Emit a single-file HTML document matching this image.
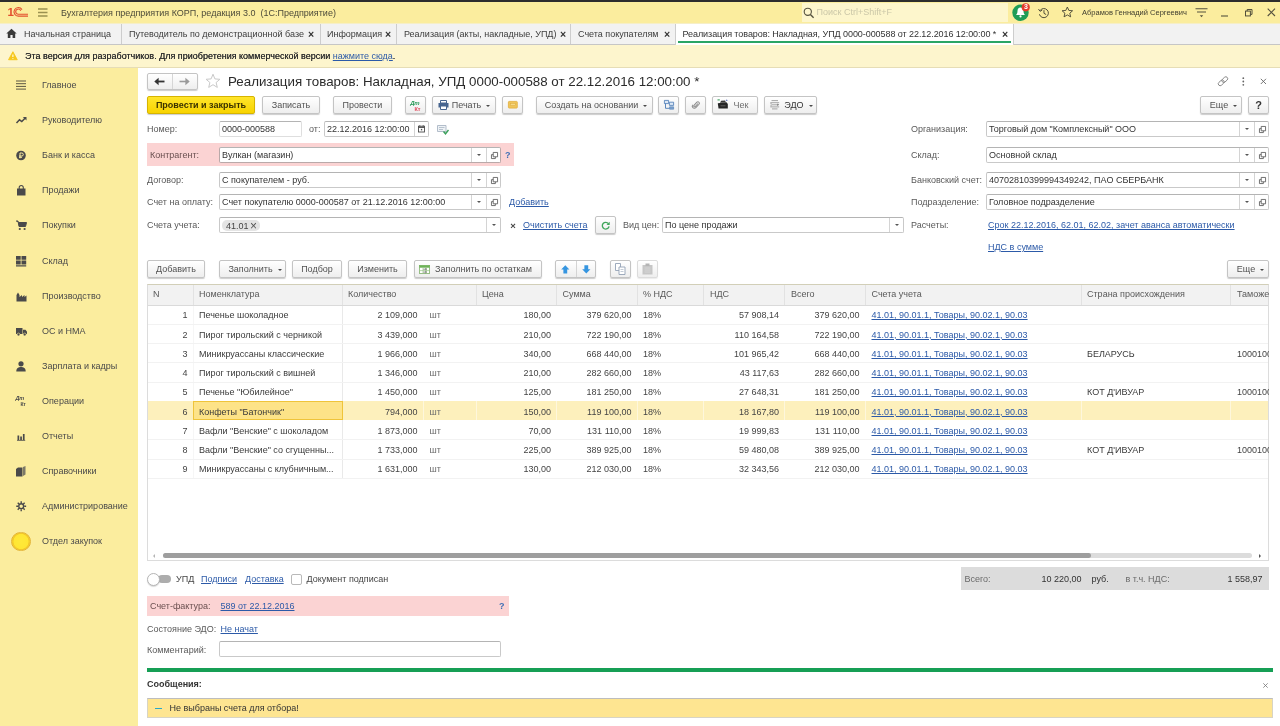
<!DOCTYPE html><html><head><meta charset="utf-8"><title>1C</title><style>
*{box-sizing:border-box;margin:0;padding:0}
html,body{width:1280px;height:726px;overflow:hidden;background:#fff}
body{font-family:"Liberation Sans",sans-serif;font-size:9px;color:#3a3a3a;position:relative;line-height:11px;will-change:transform}
.a{position:absolute;white-space:nowrap}
svg{position:absolute;overflow:visible}
.topbar{left:0;top:0;width:1280px;height:2px;background:#2d2d2d}
.hdr{left:0;top:2px;width:1280px;height:22px;background:#fbed9e;border-bottom:1px solid #f6efc8}
.tabs{left:0;top:24px;width:1280px;height:21px;background:#f2f2f2;border-bottom:1px solid #c6c6c6}
.warn{left:0;top:45px;width:1280px;height:23px;background:#fdf5cd;border-bottom:1px solid #e6ddb6}
.side{left:0;top:68px;width:138px;height:658px;background:#fbed9e}
.tsep{top:24px;width:1px;height:20px;background:#cdcdcd}
.tt{top:28px;color:#3c3c3c;line-height:12px}
.tx{top:27.500px;color:#333;font-weight:bold;font-size:10.500px;line-height:12px}
.btn{border:1px solid #c4c4c4;border-radius:2px;background:linear-gradient(#ffffff,#eeeeee);box-shadow:0 1px 1px rgba(0,0,0,.2);color:#525252;text-align:center;height:18px;line-height:16px}
.ybtn{border:1px solid #d6b400;background:linear-gradient(#ffe52b,#f8d300);font-weight:bold;color:#3a3200}
.inp{border:1px solid #c9c9c9;border-top-color:#b2b2b2;border-radius:2px;background:#fff;height:16px;line-height:14px;padding-left:2px;color:#333;overflow:hidden}
.lbl{color:#595959;line-height:12px}
.lnk{color:#2c5aa8;text-decoration:underline}
.sb{left:42px;color:#4a4a4a;line-height:12px}
</style></head><body><div class="a topbar"></div><div class="a hdr"></div><div class="a tabs"></div><div class="a warn"></div><div class="a side"></div><div class="a" style="left:7.500px;top:5.500px;font-size:11.500px;font-weight:bold;color:#e3502f;line-height:12px;letter-spacing:-1px">1</div><svg style="left:12px;top:7px" width="17" height="10" viewBox="0 0 17 10"><path d="M10 2.600A4.300 4.300 0 1 0 6.300 9.100H16" fill="none" stroke="#e3502f" stroke-width="1.100"/><path d="M8.700 3.700A2.600 2.600 0 1 0 6.300 7.300H16" fill="none" stroke="#e3502f" stroke-width="1.100"/></svg><svg style="left:37.500px;top:8px" width="10" height="9" viewBox="0 0 10 9"><path d="M0 1H9.500M0 4.500H9.500M0 8H9.500" stroke="#9a9150" stroke-width="1.300"/></svg><div class="a" style="left:61px;top:7px;color:#4d4b3a;line-height:12px">Бухгалтерия предприятия КОРП, редакция 3.0&nbsp; (1С:Предприятие)</div><div class="a" style="left:802px;top:2.500px;width:206px;height:19.800px;background:#fdf6cc"></div><svg style="left:802.700px;top:6.800px" width="12" height="12" viewBox="0 0 12 12"><circle cx="4.8" cy="4.8" r="3.6" fill="none" stroke="#55523f" stroke-width="1.1"/><path d="M7.4 7.6L10.6 10.8" stroke="#55523f" stroke-width="1.4"/></svg><div class="a" style="left:816.500px;top:6px;color:#cbc7a8;line-height:12px">Поиск Ctrl+Shift+F</div><svg style="left:1012.300px;top:4.300px" width="20" height="18" viewBox="0 0 20 18"><circle cx="8.5" cy="8.8" r="8.2" fill="#1f9d57"/><path d="M8.5 3.6c-2 0-3 1.6-3 3.4 0 2.2-.8 3.3-1.6 4.1h9.2c-.8-.8-1.6-1.900-1.600-4.100 0-1.800-1-3.400-3-3.400z" fill="#fff"/><circle cx="8.500" cy="12.4" r="1.100" fill="#fff"/><circle cx="13.700" cy="3.300" r="4.100" fill="#e53a2d"/></svg><div class="a" style="left:1023px;top:3px;width:6px;color:#fff;font-size:7px;font-weight:bold;line-height:8px;text-align:center">3</div><svg style="left:1038px;top:6.800px" width="12.300" height="12.300" viewBox="0 0 14 14"><path d="M2.2 4.2A5.2 5.2 0 1 1 1.600 8.300" fill="none" stroke="#4b4937" stroke-width="1.100"/><path d="M0.600 2.400L2.300 4.900L4.800 3.600" fill="none" stroke="#4b4937" stroke-width="1.100"/><path d="M6.800 3.600V7.200L9.300 8.600" fill="none" stroke="#4b4937" stroke-width="1.100"/></svg><svg style="left:1061.200px;top:5.800px" width="12.700" height="11.900" viewBox="0 0 15 14"><path d="M7.5 1.200L9.300 5.200L13.700 5.600L10.400 8.500L11.400 12.800L7.500 10.500L3.600 12.800L4.600 8.500L1.300 5.600L5.700 5.200Z" fill="none" stroke="#4b4937" stroke-width="1.100" stroke-linejoin="round"/></svg><div class="a" style="left:1082px;top:8px;font-size:7.5px;color:#3e3c2e;line-height:10px">Абрамов Геннадий Сергеевич</div><svg style="left:1195px;top:8px" width="13" height="10" viewBox="0 0 13 10"><path d="M0.500 0.700H12.500M2 4H11" stroke="#55523f" stroke-width="1.100"/><path d="M4.800 7.200H8.200L6.500 9.200Z" fill="#55523f"/></svg><svg style="left:1221px;top:15px" width="8" height="2" viewBox="0 0 8 2"><path d="M0 1H7" stroke="#55523f" stroke-width="1.100"/></svg><svg style="left:1244.800px;top:8.500px" width="7.800" height="7.800" viewBox="0 0 9 9"><rect x="0.600" y="2.400" width="5.600" height="5.600" fill="none" stroke="#4b4937" stroke-width="1.100"/><path d="M2.500 2.400V0.600H8.100V6.200H6.200" fill="none" stroke="#4b4937" stroke-width="1.100"/></svg><svg style="left:1267px;top:8px" width="9" height="9" viewBox="0 0 9 9"><path d="M0.700 0.700L8 8M8 0.700L0.700 8" stroke="#55523f" stroke-width="1.100"/></svg><svg style="left:6px;top:28px" width="11" height="11" viewBox="0 0 11 11"><path d="M5.500 0.800L0.300 5.600H1.800V10H4.400V6.900H6.600V10H9.200V5.600H10.700Z" fill="#3a3a3a"/></svg><div class="a tt" style="left:24px">Начальная страница</div><div class="a tsep" style="left:121px"></div><div class="a tt" style="left:129px">Путеводитель по демонстрационной базе</div><div class="a tx" style="left:308px">×</div><div class="a tsep" style="left:320px"></div><div class="a tt" style="left:327px">Информация</div><div class="a tx" style="left:385px">×</div><div class="a tsep" style="left:396px"></div><div class="a tt" style="left:404px">Реализация (акты, накладные, УПД)</div><div class="a tx" style="left:560px">×</div><div class="a tsep" style="left:570px"></div><div class="a tt" style="left:578px">Счета покупателям</div><div class="a tx" style="left:664px">×</div><div class="a" style="left:675px;top:24px;width:339px;height:21px;background:#fff;border-left:1px solid #cdcdcd;border-right:1px solid #cdcdcd"></div><div class="a" style="left:678px;top:41.300px;width:333px;height:1.500px;background:#2aa565"></div><div class="a tt" id="acttab" style="left:682.500px;color:#333;letter-spacing:-0.065px">Реализация товаров: Накладная, УПД 0000-000588 от 22.12.2016 12:00:00 *</div><div class="a tx" style="left:1002px">×</div><svg style="left:7.500px;top:51.300px" width="9.800" height="9.800" viewBox="0 0 11 11"><path d="M5.500 0.800L10.400 9.800H0.600Z" fill="#f6c71c" stroke="#f6c71c" stroke-width="1" stroke-linejoin="round"/><path d="M5.500 3.800V6.600M5.500 7.800V8.800" stroke="#fff" stroke-width="1.200"/></svg><div class="a" style="left:25px;top:50px;color:#2f2f2f;line-height:12px;text-shadow:0 0 0.200px #2f2f2f">Эта версия для разработчиков. Для приобретения коммерческой версии <span class="lnk" style="text-shadow:none">нажмите сюда</span>.</div><div class="a sb" style="top:79.1px">Главное</div><svg style="left:16px;top:80.1px" width="11" height="11" viewBox="0 0 11 11"><path d="M0 1H10M0 3.700H10M0 6.400H10M0 9.100H10" stroke="#5a5743" stroke-width="1"/></svg><div class="a sb" style="top:114.2px">Руководителю</div><svg style="left:16px;top:115.2px" width="11" height="11" viewBox="0 0 11 11"><path d="M0.500 8L3.500 4.800L5.800 6.600L9.500 2.800" fill="none" stroke="#4a4a4a" stroke-width="1.500"/><path d="M6.800 2H10.500V5.600Z" fill="#4a4a4a"/></svg><div class="a sb" style="top:149.3px">Банк и касса</div><svg style="left:16px;top:150.3px" width="11" height="11" viewBox="0 0 11 11"><circle cx="5" cy="5.500" r="4.800" fill="#4a4a4a"/><path d="M4 8.300V3H5.800A1.500 1.500 0 0 1 5.800 6H3M3 7.300H6" fill="none" stroke="#fbed9e" stroke-width="1"/></svg><div class="a sb" style="top:184.3px">Продажи</div><svg style="left:16px;top:185.3px" width="11" height="11" viewBox="0 0 11 11"><path d="M1 3.500H9.500V10.500H1Z" fill="#4a4a4a"/><path d="M3.200 4.500V2.500A2 2 0 0 1 7.300 2.500V4.500" fill="none" stroke="#4a4a4a" stroke-width="1.100"/></svg><div class="a sb" style="top:219.4px">Покупки</div><svg style="left:16px;top:220.4px" width="11" height="11" viewBox="0 0 11 11"><path d="M0 1H2L3 6.500H9.500L10.500 2.500H2.500" fill="#4a4a4a" stroke="#4a4a4a" stroke-width="1" stroke-linejoin="round"/><circle cx="3.800" cy="9" r="1.100" fill="#4a4a4a"/><circle cx="8.600" cy="9" r="1.100" fill="#4a4a4a"/></svg><div class="a sb" style="top:254.5px">Склад</div><svg style="left:16px;top:255.5px" width="11" height="11" viewBox="0 0 11 11"><path d="M0 0H4.700V3.800H0ZM5.500 0H10.200V3.800H5.500ZM0 4.600H4.700V8.400H0ZM5.500 4.600H10.200V8.400H5.500ZM0 9.200H10.200V10.400H0Z" fill="#4a4a4a"/></svg><div class="a sb" style="top:289.6px">Производство</div><svg style="left:16px;top:290.6px" width="11" height="11" viewBox="0 0 11 11"><path d="M0.500 10.500V4L2 1.500L3.500 4V6L6 4V6L8.500 4V6L10.500 4.500V10.500Z" fill="#4a4a4a"/></svg><div class="a sb" style="top:324.7px">ОС и НМА</div><svg style="left:16px;top:325.7px" width="11" height="11" viewBox="0 0 11 11"><path d="M0 2H6.500V8H0ZM7 3.800H9.500L11 5.800V8H7Z" fill="#4a4a4a"/><circle cx="2.500" cy="8.500" r="1.400" fill="#4a4a4a" stroke="#fbed9e" stroke-width=".6"/><circle cx="8.700" cy="8.500" r="1.400" fill="#4a4a4a" stroke="#fbed9e" stroke-width=".6"/></svg><div class="a sb" style="top:359.7px">Зарплата и кадры</div><svg style="left:16px;top:360.7px" width="11" height="11" viewBox="0 0 11 11"><circle cx="5" cy="2.800" r="2.600" fill="#4a4a4a"/><path d="M0.300 10.500C0.300 7 2.500 6 5 6S9.700 7 9.700 10.500Z" fill="#4a4a4a"/></svg><div class="a sb" style="top:394.8px">Операции</div><div class="a sb" style="top:429.9px">Отчеты</div><svg style="left:16px;top:430.9px" width="11" height="11" viewBox="0 0 11 11"><path d="M1.500 4.500H3.200V9H1.500ZM4.200 5.500H5.900V9H4.200ZM6.900 3H8.600V9H6.900Z" fill="#4a4a4a"/><path d="M1 9.400H9.200" stroke="#4a4a4a" stroke-width=".8"/></svg><div class="a sb" style="top:465.0px">Справочники</div><svg style="left:16px;top:466.0px" width="11" height="11" viewBox="0 0 11 11"><path d="M0 3L2 1.500H6.500V10.500H0Z" fill="#4a4a4a"/><path d="M7 1V10L9.500 8.500V0Z" fill="#7c7967"/></svg><div class="a sb" style="top:500.1px">Администрирование</div><div class="a sb" style="top:535.1px">Отдел закупок</div><div class="a" style="left:15.500px;top:394.8px;font-size:5.500px;font-weight:bold;font-style:italic;color:#4a4a4a;line-height:6px;letter-spacing:-0.300px">Дт</div><div class="a" style="left:20.500px;top:400.8px;font-size:5px;font-weight:bold;color:#4a4a4a;line-height:6px;letter-spacing:-0.300px">Кт</div><svg style="left:16.300px;top:501.4px" width="10.400" height="10.400" viewBox="0 0 12 12"><circle cx="6" cy="6" r="2.800" fill="none" stroke="#4a4a4a" stroke-width="1.600"/><path d="M6 0.300V2.500M6 9.500V11.700M0.300 6H2.500M9.500 6H11.700M2 2L3.500 3.500M8.500 8.500L10 10M2 10L3.500 8.500M8.500 3.500L10 2" stroke="#4a4a4a" stroke-width="1.600"/></svg><div class="a" style="left:11.300px;top:531.9px;width:19.400px;height:19.400px;border-radius:50%;background:radial-gradient(circle,#ffe93a 0,#ffe633 58%,#f2c62a 64%,#fad52a 72%,#f7d02a 100%);border:1.200px solid #e3b436"></div><div class="a btn" style="left:147px;top:73px;width:51px;height:17px"></div><div class="a" style="left:172px;top:74px;width:1px;height:15px;background:#d6d6d6"></div><svg style="left:154px;top:77px" width="11" height="9" viewBox="0 0 11 9"><path d="M10.500 4.500H2" stroke="#333" stroke-width="1.800"/><path d="M0.300 4.500L4.600 0.800V8.200Z" fill="#333"/></svg><svg style="left:179px;top:77px" width="11" height="9" viewBox="0 0 11 9"><path d="M0.500 4.500H9" stroke="#9a9a9a" stroke-width="1.600"/><path d="M10.700 4.500L6.400 0.800V8.200Z" fill="#9a9a9a"/></svg><svg style="left:205px;top:73px" width="16" height="16" viewBox="0 0 16 16"><path d="M8 1.200L9.900 5.900L14.900 6.300L11.100 9.500L12.300 14.400L8 11.700L3.700 14.400L4.900 9.500L1.100 6.300L6.100 5.900Z" fill="#fff" stroke="#c9c9c9" stroke-width="1" stroke-linejoin="round"/></svg><div class="a" style="left:228px;top:74px;font-size:13.330px;line-height:16px;color:#2b2b2b">Реализация товаров: Накладная, УПД 0000-000588 от 22.12.2016 12:00:00 *</div><svg style="left:1216.500px;top:74.500px" width="12" height="12.500" viewBox="0 0 12 12.500"><g fill="none" stroke="#858585" stroke-width="0.900" transform="rotate(-42 6 6.250)"><rect x="0.300" y="4.350" width="6.600" height="3.800" rx="1.900"/><rect x="5.100" y="4.350" width="6.600" height="3.800" rx="1.900"/></g></svg><svg style="left:1241.500px;top:76.800px" width="3" height="10" viewBox="0 0 3 10"><circle cx="1.300" cy="1.200" r="0.900" fill="#666"/><circle cx="1.300" cy="4.500" r="0.900" fill="#666"/><circle cx="1.300" cy="7.800" r="0.900" fill="#666"/></svg><svg style="left:1260.200px;top:77.700px" width="7" height="7" viewBox="0 0 7 7"><path d="M0.800 0.800L6 6M6 0.800L0.800 6" stroke="#666" stroke-width="0.900"/></svg><div class="a btn ybtn" style="left:147px;top:96px;width:108px;height:18px;line-height:16px;">Провести и закрыть</div><div class="a btn " style="left:262px;top:96px;width:58px;height:18px;line-height:16px;">Записать</div><div class="a btn " style="left:333px;top:96px;width:59px;height:18px;line-height:16px;">Провести</div><div class="a btn " style="left:405px;top:96px;width:21px;height:18px;line-height:16px;"></div><div class="a" style="left:410.300px;top:100px;font-size:6px;font-weight:bold;font-style:italic;color:#2a9a5a;line-height:7px;letter-spacing:-0.300px">Дт</div><div class="a" style="left:414.500px;top:105.500px;font-size:5.500px;font-weight:bold;color:#e0485a;line-height:6px">Кт</div><div class="a btn " style="left:432px;top:96px;width:64px;height:18px;line-height:16px;"><span style="margin-left:14px">Печать</span><span style="display:inline-block;width:0;height:0;border:2px solid transparent;border-top:2.500px solid #4a4a4a;border-bottom:0;vertical-align:middle;margin-left:5px;position:relative;top:0.500px"></span></div><svg style="left:438px;top:100px" width="11" height="10" viewBox="0 0 11 10"><path d="M2.500 0.500H8.500V3H2.500Z" fill="#fff" stroke="#46648f" stroke-width="1"/><path d="M0.500 3H10.500V7.500H0.500Z" fill="#46648f"/><path d="M2.500 6H8.500V9.500H2.500Z" fill="#fff" stroke="#46648f" stroke-width="1"/></svg><div class="a btn " style="left:502px;top:96px;width:21px;height:18px;line-height:16px;"></div><svg style="left:507.600px;top:101.300px" width="9.700" height="7.500" viewBox="0 0 9.700 7.500"><rect x="0.400" y="0.400" width="8.900" height="6.700" rx="0.800" fill="#efc55a" stroke="#e2ad3c" stroke-width="0.800"/><rect x="2.300" y="2.300" width="5.100" height="2.400" fill="#f6d987" stroke="#dba83a" stroke-width="0.500"/></svg><div class="a btn " style="left:536px;top:96px;width:117px;height:18px;line-height:16px;"><span style="margin-left:3px">Создать на основании</span><span style="display:inline-block;width:0;height:0;border:2px solid transparent;border-top:2.500px solid #4a4a4a;border-bottom:0;vertical-align:middle;margin-left:5px;position:relative;top:0.500px"></span></div><div class="a btn " style="left:658px;top:96px;width:21px;height:18px;line-height:16px;"></div><svg style="left:664px;top:100.300px" width="10" height="9.500" viewBox="0 0 10 9.500"><path d="M0.400 0.400H4.600V3.600H0.400Z" fill="#dce8f6" stroke="#4a7ab5" stroke-width="0.800"/><path d="M5.400 2.200H9.600V5.400H5.400Z" fill="#dce8f6" stroke="#4a7ab5" stroke-width="0.800"/><path d="M1.500 3.600V8.300H5.500" fill="none" stroke="#4a7ab5" stroke-width="0.900"/><path d="M5.600 6.800H9.600V9.200H5.600Z" fill="#7fa3cf" stroke="#4a7ab5" stroke-width="0.600"/></svg><div class="a btn " style="left:685px;top:96px;width:21px;height:18px;line-height:16px;"></div><svg style="left:691px;top:100.800px" width="9.500" height="8.200" viewBox="0 0 11 12"><path d="M8.800 4.200L4.800 8.600A1.300 1.300 0 0 1 2.900 6.800L7.200 2.200A2.200 2.200 0 0 1 10.300 5.300L5.600 10.300A3 3 0 0 1 1.300 6" fill="none" stroke="#8a8a8a" stroke-width="1.500" transform="translate(0 -0.500)"/></svg><div class="a btn " style="left:712px;top:96px;width:46px;height:18px;line-height:16px;"><span style="margin-left:12px;color:#6e6e6e">Чек</span></div><svg style="left:717px;top:99px" width="11.500" height="10" viewBox="0 0 11.500 10"><path d="M0.800 4.200L9.500 3.200L10.800 5V9.600H1.500Z" fill="#262626"/><path d="M3 3.800L4.200 1.800L8 1.400L9 3.400Z" fill="#3a3a3a"/><path d="M0.500 0.900H2.800" stroke="#3aa05a" stroke-width="1.100"/><path d="M8.600 1.800L9.900 0.300L10.600 2" fill="#5b6fc0"/><path d="M3.500 6.800H8.500" stroke="#777" stroke-width="0.700"/></svg><div class="a btn " style="left:764px;top:96px;width:53px;height:18px;line-height:16px;"><span style="margin-left:16px;color:#333">ЭДО</span><span style="display:inline-block;width:0;height:0;border:2px solid transparent;border-top:2.500px solid #4a4a4a;border-bottom:0;vertical-align:middle;margin-left:5px;position:relative;top:0.500px"></span></div><svg style="left:769.500px;top:100.300px" width="9.500" height="9.500" viewBox="0 0 9.500 9.500"><path d="M1.500 0.600H8M0.300 2.700H9.200M1.500 4.800H8M0.300 6.900H9.200M2 8.900H7.500" stroke="#9a9a9a" stroke-width="0.900"/><path d="M7.300 3.600L9.200 4.800L7.300 6Z" fill="#777"/><path d="M0.300 3.800H1.800M0.300 5.800H1.800" stroke="#888" stroke-width="0.700"/></svg><div class="a btn " style="left:1200px;top:96px;width:42px;height:18px;line-height:16px;"><span style="margin-left:5px">Еще</span><span style="display:inline-block;width:0;height:0;border:2px solid transparent;border-top:2.500px solid #4a4a4a;border-bottom:0;vertical-align:middle;margin-left:5px;position:relative;top:0.500px"></span></div><div class="a btn " style="left:1248px;top:96px;width:21px;height:18px;line-height:16px;font-weight:bold;color:#333;font-size:11px">?</div><div class="a lbl" style="left:147px;top:122.5px;">Номер:</div><div class="a inp" style="left:219px;top:121px;width:83px;height:16px;line-height:14px;border-color:#dedede;border-top-color:#b4b4b4">0000-000588</div><div class="a lbl" style="left:309px;top:122.5px;">от:</div><div class="a inp" style="left:324px;top:121px;width:105px;height:16px;line-height:14px;border-color:#c9c9c9;border-top-color:#b4b4b4">22.12.2016 12:00:00</div><div class="a" style="left:414px;top:122px;width:1px;height:14px;background:#d4d4d4"></div><svg style="left:417.500px;top:124.500px" width="7" height="7.500" viewBox="0 0 7 7.500"><rect x="0.500" y="1.200" width="6" height="5.800" fill="#fff" stroke="#4a4a4a" stroke-width="0.900"/><path d="M0.500 2.300H6.500" stroke="#4a4a4a" stroke-width="1.200"/><path d="M1.800 0.200V1.500M5.200 0.200V1.500" stroke="#4a4a4a" stroke-width="0.900"/><rect x="2.900" y="3.900" width="1.300" height="1.500" fill="#555"/></svg><svg style="left:437px;top:125px" width="12" height="10" viewBox="0 0 12 10"><path d="M0.500 0.500H9V6.500H0.500Z" fill="#eef2f6" stroke="#a9b6c4" stroke-width="0.900"/><path d="M2 2.500H7.500M2 4.500H6" stroke="#a9b6c4" stroke-width="0.800"/><path d="M6.500 6.500L8.500 8.800L11.500 5" fill="none" stroke="#3aa05a" stroke-width="1.400"/></svg><div class="a" style="left:147px;top:143px;width:367px;height:23px;background:#fbd3d3"></div><div class="a lbl" style="left:150px;top:148.5px;color:#6a5050;">Контрагент:</div><div class="a inp" style="left:219px;top:147px;width:282px;height:16px;line-height:14px;border-color:#b9a9a9;border-top-color:#b4b4b4">Вулкан (магазин)</div><div class="a" style="left:471px;top:148px;width:1px;height:14px;background:#d4d4d4"></div><div class="a" style="left:486px;top:148px;width:1px;height:14px;background:#d4d4d4"></div><div class="a" style="left:476.5px;top:154.2px;width:0;height:0;border:2px solid transparent;border-top:2.500px solid #555;border-bottom:0"></div><svg style="left:490.5px;top:151.5px" width="7" height="7" viewBox="0 0 8 8"><path d="M2.500 0.500H7.500V5.500H2.500Z" fill="#fff" stroke="#5e5e5e" stroke-width="1"/><path d="M2.500 3H0.500V7.500H5V5.500" fill="none" stroke="#5e5e5e" stroke-width="1"/></svg><div class="a" style="left:505px;top:148.500px;font-weight:bold;color:#3f6fb5;line-height:12px">?</div><div class="a lbl" style="left:147px;top:173.5px;">Договор:</div><div class="a inp" style="left:219px;top:172px;width:282px;height:16px;line-height:14px;border-color:#c9c9c9;border-top-color:#b4b4b4">С покупателем - руб.</div><div class="a" style="left:471px;top:173px;width:1px;height:14px;background:#d4d4d4"></div><div class="a" style="left:486px;top:173px;width:1px;height:14px;background:#d4d4d4"></div><div class="a" style="left:476.5px;top:179.2px;width:0;height:0;border:2px solid transparent;border-top:2.500px solid #555;border-bottom:0"></div><svg style="left:490.5px;top:176.5px" width="7" height="7" viewBox="0 0 8 8"><path d="M2.500 0.500H7.500V5.500H2.500Z" fill="#fff" stroke="#5e5e5e" stroke-width="1"/><path d="M2.500 3H0.500V7.500H5V5.500" fill="none" stroke="#5e5e5e" stroke-width="1"/></svg><div class="a lbl" style="left:147px;top:195.5px;">Счет на оплату:</div><div class="a inp" style="left:219px;top:194px;width:282px;height:16px;line-height:14px;border-color:#c9c9c9;border-top-color:#b4b4b4">Счет покупателю 0000-000587 от 21.12.2016 12:00:00</div><div class="a" style="left:471px;top:195px;width:1px;height:14px;background:#d4d4d4"></div><div class="a" style="left:486px;top:195px;width:1px;height:14px;background:#d4d4d4"></div><div class="a" style="left:476.5px;top:201.2px;width:0;height:0;border:2px solid transparent;border-top:2.500px solid #555;border-bottom:0"></div><svg style="left:490.5px;top:198.5px" width="7" height="7" viewBox="0 0 8 8"><path d="M2.500 0.500H7.500V5.500H2.500Z" fill="#fff" stroke="#5e5e5e" stroke-width="1"/><path d="M2.500 3H0.500V7.500H5V5.500" fill="none" stroke="#5e5e5e" stroke-width="1"/></svg><div class="a lnk" style="left:509px;top:195.5px;line-height:12px">Добавить</div><div class="a lbl" style="left:147px;top:219.0px;">Счета учета:</div><div class="a inp" style="left:219px;top:217px;width:282px;height:16px;line-height:14px;border-color:#c9c9c9;border-top-color:#b4b4b4"><span style="display:inline-block;background:#e4e4e4;border-radius:5px;height:11px;line-height:11px;padding:0 3px 0 4px;margin-left:0px;color:#444;position:relative;top:0.500px">41.01<span style="font-size:12px;line-height:11px;color:#555;margin-left:1.500px;position:relative;top:1px">×</span></span></div><div class="a" style="left:486px;top:218px;width:1px;height:14px;background:#d4d4d4"></div><div class="a" style="left:491.5px;top:224.2px;width:0;height:0;border:2px solid transparent;border-top:2.500px solid #555;border-bottom:0"></div><div class="a" style="left:510.300px;top:219.500px;color:#444;font-size:9.500px;font-weight:bold;line-height:12px">×</div><div class="a lnk" style="left:523px;top:219.0px;line-height:12px">Очистить счета</div><div class="a btn " style="left:595px;top:216px;width:21px;height:18px;line-height:16px;"></div><svg style="left:600.800px;top:220.800px" width="9.300" height="9.300" viewBox="0 0 11 11"><path d="M8.800 3.200A4 4 0 1 0 9.500 6.300" fill="none" stroke="#3fa55a" stroke-width="1.600"/><path d="M10.300 0.800V4.600H6.500Z" fill="#3fa55a"/></svg><div class="a lbl" style="left:623px;top:219.0px;">Вид цен:</div><div class="a inp" style="left:662px;top:217px;width:242px;height:16px;line-height:14px;border-color:#c9c9c9;border-top-color:#b4b4b4">По цене продажи</div><div class="a" style="left:889px;top:218px;width:1px;height:14px;background:#d4d4d4"></div><div class="a" style="left:894.5px;top:224.2px;width:0;height:0;border:2px solid transparent;border-top:2.500px solid #555;border-bottom:0"></div><div class="a lbl" style="left:911px;top:122.5px;">Организация:</div><div class="a inp" style="left:986px;top:121px;width:283px;height:16px;line-height:14px;border-color:#c9c9c9;border-top-color:#b4b4b4">Торговый дом "Комплексный" ООО</div><div class="a" style="left:1239px;top:122px;width:1px;height:14px;background:#d4d4d4"></div><div class="a" style="left:1254px;top:122px;width:1px;height:14px;background:#d4d4d4"></div><div class="a" style="left:1244.5px;top:128.2px;width:0;height:0;border:2px solid transparent;border-top:2.500px solid #555;border-bottom:0"></div><svg style="left:1258.5px;top:125.5px" width="7" height="7" viewBox="0 0 8 8"><path d="M2.500 0.500H7.500V5.500H2.500Z" fill="#fff" stroke="#5e5e5e" stroke-width="1"/><path d="M2.500 3H0.500V7.500H5V5.500" fill="none" stroke="#5e5e5e" stroke-width="1"/></svg><div class="a lbl" style="left:911px;top:148.5px;">Склад:</div><div class="a inp" style="left:986px;top:147px;width:283px;height:16px;line-height:14px;border-color:#c9c9c9;border-top-color:#b4b4b4">Основной склад</div><div class="a" style="left:1239px;top:148px;width:1px;height:14px;background:#d4d4d4"></div><div class="a" style="left:1254px;top:148px;width:1px;height:14px;background:#d4d4d4"></div><div class="a" style="left:1244.5px;top:154.2px;width:0;height:0;border:2px solid transparent;border-top:2.500px solid #555;border-bottom:0"></div><svg style="left:1258.5px;top:151.5px" width="7" height="7" viewBox="0 0 8 8"><path d="M2.500 0.500H7.500V5.500H2.500Z" fill="#fff" stroke="#5e5e5e" stroke-width="1"/><path d="M2.500 3H0.500V7.500H5V5.500" fill="none" stroke="#5e5e5e" stroke-width="1"/></svg><div class="a lbl" style="left:911px;top:173.5px;">Банковский счет:</div><div class="a inp" style="left:986px;top:172px;width:283px;height:16px;line-height:14px;border-color:#c9c9c9;border-top-color:#b4b4b4">40702810399994349242, ПАО СБЕРБАНК</div><div class="a" style="left:1239px;top:173px;width:1px;height:14px;background:#d4d4d4"></div><div class="a" style="left:1254px;top:173px;width:1px;height:14px;background:#d4d4d4"></div><div class="a" style="left:1244.5px;top:179.2px;width:0;height:0;border:2px solid transparent;border-top:2.500px solid #555;border-bottom:0"></div><svg style="left:1258.5px;top:176.5px" width="7" height="7" viewBox="0 0 8 8"><path d="M2.500 0.500H7.500V5.500H2.500Z" fill="#fff" stroke="#5e5e5e" stroke-width="1"/><path d="M2.500 3H0.500V7.500H5V5.500" fill="none" stroke="#5e5e5e" stroke-width="1"/></svg><div class="a lbl" style="left:911px;top:195.5px;">Подразделение:</div><div class="a inp" style="left:986px;top:194px;width:283px;height:16px;line-height:14px;border-color:#c9c9c9;border-top-color:#b4b4b4">Головное подразделение</div><div class="a" style="left:1239px;top:195px;width:1px;height:14px;background:#d4d4d4"></div><div class="a" style="left:1254px;top:195px;width:1px;height:14px;background:#d4d4d4"></div><div class="a" style="left:1244.5px;top:201.2px;width:0;height:0;border:2px solid transparent;border-top:2.500px solid #555;border-bottom:0"></div><svg style="left:1258.5px;top:198.5px" width="7" height="7" viewBox="0 0 8 8"><path d="M2.500 0.500H7.500V5.500H2.500Z" fill="#fff" stroke="#5e5e5e" stroke-width="1"/><path d="M2.500 3H0.500V7.500H5V5.500" fill="none" stroke="#5e5e5e" stroke-width="1"/></svg><div class="a lbl" style="left:911px;top:219.0px;">Расчеты:</div><div class="a lnk" style="left:988px;top:219.0px;line-height:12px">Срок 22.12.2016, 62.01, 62.02, зачет аванса автоматически</div><div class="a lnk" style="left:988px;top:241.0px;line-height:12px">НДС в сумме</div><div class="a btn " style="left:147px;top:260px;width:58px;height:18px;line-height:16px;">Добавить</div><div class="a btn " style="left:219px;top:260px;width:67px;height:18px;line-height:16px;"><span style="margin-left:5px">Заполнить</span><span style="display:inline-block;width:0;height:0;border:2px solid transparent;border-top:2.500px solid #4a4a4a;border-bottom:0;vertical-align:middle;margin-left:5px;position:relative;top:0.500px"></span></div><div class="a btn " style="left:292px;top:260px;width:50px;height:18px;line-height:16px;">Подбор</div><div class="a btn " style="left:348px;top:260px;width:59px;height:18px;line-height:16px;">Изменить</div><div class="a btn " style="left:414px;top:260px;width:128px;height:18px;line-height:16px;"><span style="margin-left:11px">Заполнить по остаткам</span></div><svg style="left:418.800px;top:264.800px" width="11" height="9" viewBox="0 0 11 9"><rect x="0.400" y="0.400" width="10.200" height="8.200" fill="#fff" stroke="#7fb069" stroke-width="0.800"/><rect x="0.400" y="0.400" width="10.200" height="2.300" fill="#6db357"/><path d="M0.400 5.600H10.600M4 2.700V8.600M7.500 2.700V8.600" stroke="#9cc58a" stroke-width="0.700"/><path d="M4.300 4.200H7.200M6.200 3.300L7.300 4.200L6.200 5.100" fill="none" stroke="#666" stroke-width="0.700"/><path d="M4.300 7.100H7.200M6.200 6.200L7.300 7.100L6.200 8" fill="none" stroke="#666" stroke-width="0.700"/></svg><div class="a btn " style="left:555px;top:260px;width:41px;height:18px;line-height:16px;"></div><div class="a" style="left:576px;top:261px;width:1px;height:16px;background:#d4d4d4"></div><svg style="left:561.300px;top:265px" width="8.600" height="8.800" viewBox="0 0 9 9.200"><path d="M4.500 0.200L8.800 4.700H6.500V9H2.500V4.700H0.200Z" fill="#3595e0"/></svg><svg style="left:581.800px;top:265px" width="8.600" height="8.800" viewBox="0 0 9 9.200"><path d="M4.500 9L8.800 4.500H6.500V0.200H2.500V4.500H0.200Z" fill="#3595e0"/></svg><div class="a btn " style="left:610px;top:260px;width:21px;height:18px;line-height:16px;"></div><svg style="left:615px;top:263px" width="11" height="12" viewBox="0 0 11 12"><path d="M0.500 0.500H5.500V7.500H0.500Z" fill="#fff" stroke="#93a2b5" stroke-width="0.900"/><path d="M4 4H10V11.500H4Z" fill="#fff" stroke="#93a2b5" stroke-width="0.900"/><path d="M5.500 6.500H8.500M5.500 8.500H8.500" stroke="#a9b5c4" stroke-width="0.700"/></svg><div class="a btn " style="left:637px;top:260px;width:21px;height:18px;line-height:16px;border-color:#dcdcdc;box-shadow:0 1px 1px rgba(0,0,0,.08)"></div><svg style="left:642px;top:263px" width="11" height="12" viewBox="0 0 11 12"><path d="M0.500 2H10.500V11.500H0.500Z" fill="#c6c6c6"/><path d="M3.500 0.500H7.500V3H3.500Z" fill="#b4b4b4"/><path d="M2.500 5H8.500M2.500 7H8.500M2.500 9H8.500" stroke="#d9d9d9" stroke-width="0.800"/></svg><div class="a btn " style="left:1227px;top:260px;width:42px;height:18px;line-height:16px;"><span style="margin-left:5px">Еще</span><span style="display:inline-block;width:0;height:0;border:2px solid transparent;border-top:2.500px solid #4a4a4a;border-bottom:0;vertical-align:middle;margin-left:5px;position:relative;top:0.500px"></span></div><div class="a" style="left:147px;top:284px;width:1122px;height:277px;border:1px solid #dcdcdc;border-top-color:#d2cfb8;background:#fff"></div><div class="a" style="left:148px;top:285px;width:1120px;height:21px;background:#f2f2f2;border-bottom:1px solid #dadada"></div><div class="a" style="left:153px;top:288px;color:#595959;line-height:12px">N</div><div class="a" style="left:199px;top:288px;color:#595959;line-height:12px">Номенклатура</div><div class="a" style="left:348px;top:288px;color:#595959;line-height:12px">Количество</div><div class="a" style="left:482px;top:288px;color:#595959;line-height:12px">Цена</div><div class="a" style="left:562.5px;top:288px;color:#595959;line-height:12px">Сумма</div><div class="a" style="left:643px;top:288px;color:#595959;line-height:12px">% НДС</div><div class="a" style="left:710px;top:288px;color:#595959;line-height:12px">НДС</div><div class="a" style="left:791px;top:288px;color:#595959;line-height:12px">Всего</div><div class="a" style="left:871.5px;top:288px;color:#595959;line-height:12px">Счета учета</div><div class="a" style="left:1087px;top:288px;color:#595959;line-height:12px">Страна происхождения</div><div class="a" style="left:1237px;top:288px;color:#595959;line-height:12px">Таможе</div><div class="a" style="left:193px;top:285px;width:1px;height:20px;background:#e2e2e2"></div><div class="a" style="left:193px;top:306px;width:1px;height:173px;background:#f6f6f6"></div><div class="a" style="left:342px;top:285px;width:1px;height:20px;background:#e2e2e2"></div><div class="a" style="left:342px;top:306px;width:1px;height:173px;background:#e9e9e9"></div><div class="a" style="left:476px;top:285px;width:1px;height:20px;background:#e2e2e2"></div><div class="a" style="left:556px;top:285px;width:1px;height:20px;background:#e2e2e2"></div><div class="a" style="left:637px;top:285px;width:1px;height:20px;background:#e2e2e2"></div><div class="a" style="left:703px;top:285px;width:1px;height:20px;background:#e2e2e2"></div><div class="a" style="left:784px;top:285px;width:1px;height:20px;background:#e2e2e2"></div><div class="a" style="left:865px;top:285px;width:1px;height:20px;background:#e2e2e2"></div><div class="a" style="left:1081px;top:285px;width:1px;height:20px;background:#e2e2e2"></div><div class="a" style="left:1230px;top:285px;width:1px;height:20px;background:#e2e2e2"></div><div class="a" style="left:148px;top:323.8px;width:1120px;height:1px;background:#f2f2f2"></div><div class="a" style="right:1092.5px;top:309.3px;color:#444;line-height:12px">1</div><div class="a" style="left:199px;top:309.3px;color:#444;line-height:12px;color:#3a3a3a">Печенье шоколадное</div><div class="a" style="right:862.5px;top:309.3px;color:#444;line-height:12px">2 109,000</div><div class="a" style="left:429.5px;top:309.3px;color:#444;line-height:12px;color:#6a6a6a">шт</div><div class="a" style="right:729px;top:309.3px;color:#444;line-height:12px">180,00</div><div class="a" style="right:648.5px;top:309.3px;color:#444;line-height:12px">379 620,00</div><div class="a" style="left:643px;top:309.3px;color:#444;line-height:12px;">18%</div><div class="a" style="right:501px;top:309.3px;color:#444;line-height:12px">57 908,14</div><div class="a" style="right:420.5px;top:309.3px;color:#444;line-height:12px">379 620,00</div><div class="a lnk" style="left:871.500px;top:309.3px;line-height:12px">41.01, 90.01.1, Товары, 90.02.1, 90.03</div><div class="a" style="left:148px;top:343.0px;width:1120px;height:1px;background:#f2f2f2"></div><div class="a" style="right:1092.5px;top:328.6px;color:#444;line-height:12px">2</div><div class="a" style="left:199px;top:328.6px;color:#444;line-height:12px;color:#3a3a3a">Пирог тирольский с черникой</div><div class="a" style="right:862.5px;top:328.6px;color:#444;line-height:12px">3 439,000</div><div class="a" style="left:429.5px;top:328.6px;color:#444;line-height:12px;color:#6a6a6a">шт</div><div class="a" style="right:729px;top:328.6px;color:#444;line-height:12px">210,00</div><div class="a" style="right:648.5px;top:328.6px;color:#444;line-height:12px">722 190,00</div><div class="a" style="left:643px;top:328.6px;color:#444;line-height:12px;">18%</div><div class="a" style="right:501px;top:328.6px;color:#444;line-height:12px">110 164,58</div><div class="a" style="right:420.5px;top:328.6px;color:#444;line-height:12px">722 190,00</div><div class="a lnk" style="left:871.500px;top:328.6px;line-height:12px">41.01, 90.01.1, Товары, 90.02.1, 90.03</div><div class="a" style="left:148px;top:362.2px;width:1120px;height:1px;background:#f2f2f2"></div><div class="a" style="right:1092.5px;top:347.8px;color:#444;line-height:12px">3</div><div class="a" style="left:199px;top:347.8px;color:#444;line-height:12px;color:#3a3a3a">Миникруассаны классические</div><div class="a" style="right:862.5px;top:347.8px;color:#444;line-height:12px">1 966,000</div><div class="a" style="left:429.5px;top:347.8px;color:#444;line-height:12px;color:#6a6a6a">шт</div><div class="a" style="right:729px;top:347.8px;color:#444;line-height:12px">340,00</div><div class="a" style="right:648.5px;top:347.8px;color:#444;line-height:12px">668 440,00</div><div class="a" style="left:643px;top:347.8px;color:#444;line-height:12px;">18%</div><div class="a" style="right:501px;top:347.8px;color:#444;line-height:12px">101 965,42</div><div class="a" style="right:420.5px;top:347.8px;color:#444;line-height:12px">668 440,00</div><div class="a lnk" style="left:871.500px;top:347.8px;line-height:12px">41.01, 90.01.1, Товары, 90.02.1, 90.03</div><div class="a" style="left:1087px;top:347.8px;color:#444;line-height:12px;color:#3a3a3a">БЕЛАРУСЬ</div><div class="a" style="left:1237px;top:347.8px;width:32px;overflow:hidden;color:#444;line-height:12px">1000100</div><div class="a" style="left:148px;top:381.5px;width:1120px;height:1px;background:#f2f2f2"></div><div class="a" style="right:1092.5px;top:367.1px;color:#444;line-height:12px">4</div><div class="a" style="left:199px;top:367.1px;color:#444;line-height:12px;color:#3a3a3a">Пирог тирольский с вишней</div><div class="a" style="right:862.5px;top:367.1px;color:#444;line-height:12px">1 346,000</div><div class="a" style="left:429.5px;top:367.1px;color:#444;line-height:12px;color:#6a6a6a">шт</div><div class="a" style="right:729px;top:367.1px;color:#444;line-height:12px">210,00</div><div class="a" style="right:648.5px;top:367.1px;color:#444;line-height:12px">282 660,00</div><div class="a" style="left:643px;top:367.1px;color:#444;line-height:12px;">18%</div><div class="a" style="right:501px;top:367.1px;color:#444;line-height:12px">43 117,63</div><div class="a" style="right:420.5px;top:367.1px;color:#444;line-height:12px">282 660,00</div><div class="a lnk" style="left:871.500px;top:367.1px;line-height:12px">41.01, 90.01.1, Товары, 90.02.1, 90.03</div><div class="a" style="left:148px;top:400.8px;width:1120px;height:1px;background:#f2f2f2"></div><div class="a" style="right:1092.5px;top:386.3px;color:#444;line-height:12px">5</div><div class="a" style="left:199px;top:386.3px;color:#444;line-height:12px;color:#3a3a3a">Печенье "Юбилейное"</div><div class="a" style="right:862.5px;top:386.3px;color:#444;line-height:12px">1 450,000</div><div class="a" style="left:429.5px;top:386.3px;color:#444;line-height:12px;color:#6a6a6a">шт</div><div class="a" style="right:729px;top:386.3px;color:#444;line-height:12px">125,00</div><div class="a" style="right:648.5px;top:386.3px;color:#444;line-height:12px">181 250,00</div><div class="a" style="left:643px;top:386.3px;color:#444;line-height:12px;">18%</div><div class="a" style="right:501px;top:386.3px;color:#444;line-height:12px">27 648,31</div><div class="a" style="right:420.5px;top:386.3px;color:#444;line-height:12px">181 250,00</div><div class="a lnk" style="left:871.500px;top:386.3px;line-height:12px">41.01, 90.01.1, Товары, 90.02.1, 90.03</div><div class="a" style="left:1087px;top:386.3px;color:#444;line-height:12px;color:#3a3a3a">КОТ Д'ИВУАР</div><div class="a" style="left:1237px;top:386.3px;width:32px;overflow:hidden;color:#444;line-height:12px">1000100</div><div class="a" style="left:148px;top:401.2px;width:1120px;height:19.2px;background:#fdf0bc"></div><div class="a" style="left:476px;top:401.2px;width:1px;height:19.2px;background:#fef7dc"></div><div class="a" style="left:556px;top:401.2px;width:1px;height:19.2px;background:#fef7dc"></div><div class="a" style="left:637px;top:401.2px;width:1px;height:19.2px;background:#fef7dc"></div><div class="a" style="left:703px;top:401.2px;width:1px;height:19.2px;background:#fef7dc"></div><div class="a" style="left:784px;top:401.2px;width:1px;height:19.2px;background:#fef7dc"></div><div class="a" style="left:865px;top:401.2px;width:1px;height:19.2px;background:#fef7dc"></div><div class="a" style="left:1081px;top:401.2px;width:1px;height:19.2px;background:#fef7dc"></div><div class="a" style="left:1230px;top:401.2px;width:1px;height:19.2px;background:#fef7dc"></div><div class="a" style="left:423px;top:401.2px;width:1px;height:19.2px;background:#fef7dc"></div><div class="a" style="left:193px;top:401.2px;width:149.500px;height:19.2px;background:#fde388;border:1px solid #efc43a"></div><div class="a" style="right:1092.5px;top:405.6px;color:#444;line-height:12px">6</div><div class="a" style="left:199px;top:405.6px;color:#444;line-height:12px;color:#3a3a3a">Конфеты "Батончик"</div><div class="a" style="right:862.5px;top:405.6px;color:#444;line-height:12px">794,000</div><div class="a" style="left:429.5px;top:405.6px;color:#444;line-height:12px;color:#6a6a6a">шт</div><div class="a" style="right:729px;top:405.6px;color:#444;line-height:12px">150,00</div><div class="a" style="right:648.5px;top:405.6px;color:#444;line-height:12px">119 100,00</div><div class="a" style="left:643px;top:405.6px;color:#444;line-height:12px;">18%</div><div class="a" style="right:501px;top:405.6px;color:#444;line-height:12px">18 167,80</div><div class="a" style="right:420.5px;top:405.6px;color:#444;line-height:12px">119 100,00</div><div class="a lnk" style="left:871.500px;top:405.6px;line-height:12px">41.01, 90.01.1, Товары, 90.02.1, 90.03</div><div class="a" style="left:148px;top:439.2px;width:1120px;height:1px;background:#f2f2f2"></div><div class="a" style="right:1092.5px;top:424.8px;color:#444;line-height:12px">7</div><div class="a" style="left:199px;top:424.8px;color:#444;line-height:12px;color:#3a3a3a">Вафли "Венские" с шоколадом</div><div class="a" style="right:862.5px;top:424.8px;color:#444;line-height:12px">1 873,000</div><div class="a" style="left:429.5px;top:424.8px;color:#444;line-height:12px;color:#6a6a6a">шт</div><div class="a" style="right:729px;top:424.8px;color:#444;line-height:12px">70,00</div><div class="a" style="right:648.5px;top:424.8px;color:#444;line-height:12px">131 110,00</div><div class="a" style="left:643px;top:424.8px;color:#444;line-height:12px;">18%</div><div class="a" style="right:501px;top:424.8px;color:#444;line-height:12px">19 999,83</div><div class="a" style="right:420.5px;top:424.8px;color:#444;line-height:12px">131 110,00</div><div class="a lnk" style="left:871.500px;top:424.8px;line-height:12px">41.01, 90.01.1, Товары, 90.02.1, 90.03</div><div class="a" style="left:148px;top:458.5px;width:1120px;height:1px;background:#f2f2f2"></div><div class="a" style="right:1092.5px;top:444.1px;color:#444;line-height:12px">8</div><div class="a" style="left:199px;top:444.1px;color:#444;line-height:12px;color:#3a3a3a">Вафли "Венские" со сгущенны...</div><div class="a" style="right:862.5px;top:444.1px;color:#444;line-height:12px">1 733,000</div><div class="a" style="left:429.5px;top:444.1px;color:#444;line-height:12px;color:#6a6a6a">шт</div><div class="a" style="right:729px;top:444.1px;color:#444;line-height:12px">225,00</div><div class="a" style="right:648.5px;top:444.1px;color:#444;line-height:12px">389 925,00</div><div class="a" style="left:643px;top:444.1px;color:#444;line-height:12px;">18%</div><div class="a" style="right:501px;top:444.1px;color:#444;line-height:12px">59 480,08</div><div class="a" style="right:420.5px;top:444.1px;color:#444;line-height:12px">389 925,00</div><div class="a lnk" style="left:871.500px;top:444.1px;line-height:12px">41.01, 90.01.1, Товары, 90.02.1, 90.03</div><div class="a" style="left:1087px;top:444.1px;color:#444;line-height:12px;color:#3a3a3a">КОТ Д'ИВУАР</div><div class="a" style="left:1237px;top:444.1px;width:32px;overflow:hidden;color:#444;line-height:12px">1000100</div><div class="a" style="left:148px;top:477.8px;width:1120px;height:1px;background:#f2f2f2"></div><div class="a" style="right:1092.5px;top:463.3px;color:#444;line-height:12px">9</div><div class="a" style="left:199px;top:463.3px;color:#444;line-height:12px;color:#3a3a3a">Миникруассаны с клубничным...</div><div class="a" style="right:862.5px;top:463.3px;color:#444;line-height:12px">1 631,000</div><div class="a" style="left:429.5px;top:463.3px;color:#444;line-height:12px;color:#6a6a6a">шт</div><div class="a" style="right:729px;top:463.3px;color:#444;line-height:12px">130,00</div><div class="a" style="right:648.5px;top:463.3px;color:#444;line-height:12px">212 030,00</div><div class="a" style="left:643px;top:463.3px;color:#444;line-height:12px;">18%</div><div class="a" style="right:501px;top:463.3px;color:#444;line-height:12px">32 343,56</div><div class="a" style="right:420.5px;top:463.3px;color:#444;line-height:12px">212 030,00</div><div class="a lnk" style="left:871.500px;top:463.3px;line-height:12px">41.01, 90.01.1, Товары, 90.02.1, 90.03</div><div class="a" style="left:163px;top:553px;width:1089px;height:5px;border-radius:3px;background:#dcdcdc"></div><div class="a" style="left:163px;top:553px;width:928px;height:5px;border-radius:3px;background:#9e9e9e"></div><div class="a" style="left:153px;top:553.500px;width:0;height:0;border:2px solid transparent;border-right:2.500px solid #b5b5b5;border-left:0"></div><div class="a" style="left:1259px;top:553.500px;width:0;height:0;border:2px solid transparent;border-left:2.500px solid #555;border-right:0"></div><div class="a" style="left:158px;top:575px;width:13px;height:8px;border-radius:4px;background:#adadad"></div><div class="a" style="left:147px;top:572.500px;width:13px;height:13px;border-radius:50%;background:#fff;border:1px solid #b5b5b5;box-shadow:0 1px 1px rgba(0,0,0,.15)"></div><div class="a lbl" style="left:176px;top:572.5px;color:#444;">УПД</div><div class="a lnk" style="left:201px;top:572.5px;line-height:12px">Подписи</div><div class="a lnk" style="left:245px;top:572.5px;line-height:12px">Доставка</div><div class="a" style="left:291px;top:573.500px;width:11px;height:11px;border:1px solid #b9b9b9;border-radius:2px;background:#fff"></div><div class="a lbl" style="left:306.5px;top:572.5px;color:#444;">Документ подписан</div><div class="a" style="left:961px;top:567px;width:308px;height:23px;background:#dcdcdc"></div><div class="a lbl" style="left:964.5px;top:573.0px;color:#6a6a6a;">Всего:</div><div class="a" style="right:198.500px;top:573px;color:#333;line-height:12px">10 220,00</div><div class="a lbl" style="left:1091.5px;top:573.0px;color:#333;">руб.</div><div class="a lbl" style="left:1125.5px;top:573.0px;color:#6a6a6a;">в т.ч. НДС:</div><div class="a" style="right:17.500px;top:573px;color:#333;line-height:12px">1 558,97</div><div class="a" style="left:147px;top:596px;width:362px;height:20px;background:#fbd3d3"></div><div class="a lbl" style="left:150px;top:600.0px;color:#6a5050;">Счет-фактура:</div><div class="a lnk" style="left:220.5px;top:600.0px;line-height:12px">589 от 22.12.2016</div><div class="a" style="left:499px;top:600px;font-weight:bold;color:#3f6fb5;line-height:12px">?</div><div class="a lbl" style="left:147px;top:622.5px;">Состояние ЭДО:</div><div class="a lnk" style="left:220.5px;top:622.5px;line-height:12px">Не начат</div><div class="a lbl" style="left:147px;top:643.5px;">Комментарий:</div><div class="a inp" style="left:219px;top:641px;width:282px;height:16px;line-height:14px;border-color:#c9c9c9;border-top-color:#b4b4b4"></div><div class="a" style="left:147px;top:668px;width:1126px;height:3.500px;background:#169f55"></div><div class="a" style="left:147px;top:678px;font-weight:bold;color:#333;line-height:12px">Сообщения:</div><svg style="left:1263px;top:683px" width="5" height="5" viewBox="0 0 5 5"><path d="M0.300 0.300L4.700 4.700M4.700 0.300L0.300 4.700" stroke="#777" stroke-width="0.800"/></svg><div class="a" style="left:147px;top:698px;width:1126px;height:20px;background:#fee591;border:1px solid #d8d4c4;border-top-color:#bdbdbd"></div><div class="a" style="left:154.500px;top:707.500px;width:7.500px;height:1.500px;background:#2aa7c9"></div><div class="a" style="left:169.500px;top:702px;color:#333;line-height:12px">Не выбраны счета для отбора!</div></body></html>
